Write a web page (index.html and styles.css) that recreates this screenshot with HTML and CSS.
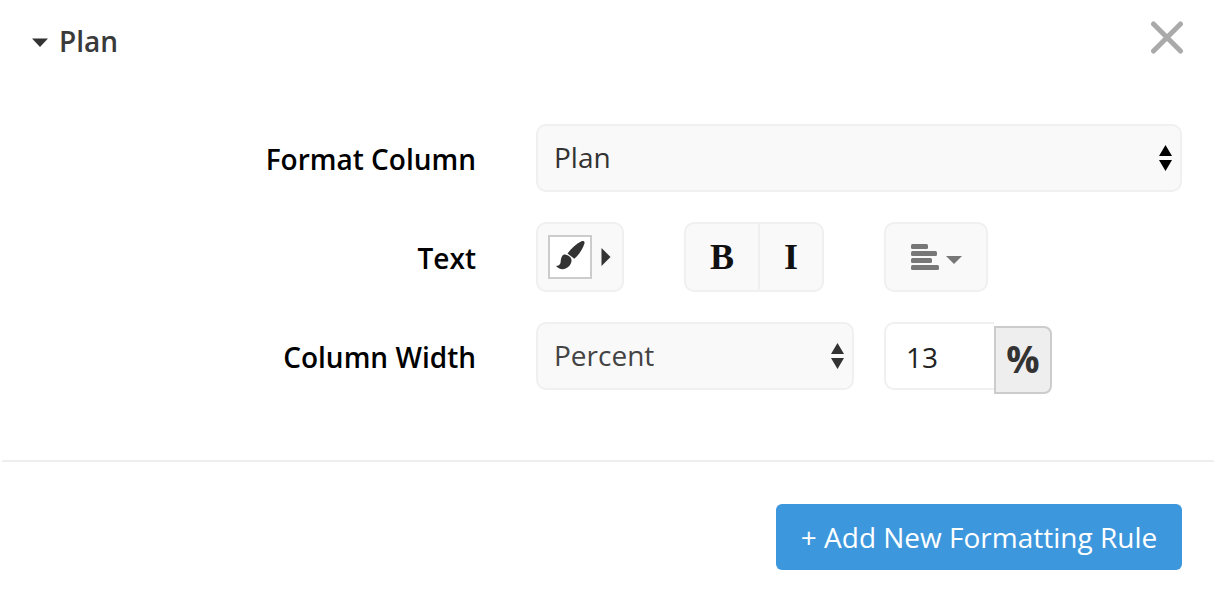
FILE: index.html
```html
<!DOCTYPE html>
<html lang="en">
<head>
<meta charset="utf-8">
<title>Plan</title>
<link rel="stylesheet" href="styles.css">
</head>
<body>
<main class="panel">
  <header class="head">
    <div class="head-title">
      <svg class="head-caret" width="16" height="9" viewBox="0 0 16 9"><path d="M0 0.500h16L8 9z"/></svg>
      <span class="head-text">Plan</span>
    </div>
    <svg class="close" width="34" height="34" viewBox="0 0 34 34"><path d="M3.500 4L30.500 31M30.500 4L3.500 31"/></svg>
  </header>
  <section class="form">
    <div class="row">
      <div class="label">Format Column</div>
      <div class="select select-wide">
        <span>Plan</span>
        <svg class="updown updown-dark" width="13" height="26" viewBox="0 0 13 26"><path d="M6.500 0L13 11H0zM0 15H13L6.500 26z"/></svg>
      </div>
    </div>
    <div class="row row-text">
      <div class="label">Text</div>
      <div class="tool tool-color">
        <span class="swatch">
          <svg width="40" height="40" viewBox="0 0 40 40"><path class="brush" d="M31.500 4.200C33.300 3.300 35 4.400 34.500 6.300 33 11.500 29 18 24.300 21.800L17.500 16.500C21 11.500 27 6.300 31.500 4.200zM14 17.500C18 17.500 22 20.300 21.500 24 21 28.800 16.500 32.300 12.500 32.200 10 32.100 7.500 31 6 29 8 29 10 28 10.500 26 11 23 11 18.800 14 17.500z"/></svg>
        </span>
        <svg class="side-caret" width="10" height="18" viewBox="0 0 10 18"><path d="M0.500 0L9.500 9L0.500 18z"/></svg>
      </div>
      <div class="btn-group">
        <div class="style-btn">B</div>
        <div class="style-btn">I</div>
      </div>
      <div class="tool tool-align">
        <svg width="52" height="27" viewBox="0 0 52 27"><g class="align-bars"><rect x="0" y="0" width="17" height="5" rx="1.500"/><rect x="0" y="7" width="26" height="5" rx="1.500"/><rect x="0" y="14" width="21" height="5" rx="1.500"/><rect x="0" y="21" width="28" height="5" rx="1.500"/></g><path class="align-bars" d="M35 12h16l-8 8z"/></svg>
      </div>
    </div>
    <div class="row row-width">
      <div class="label">Column Width</div>
      <div class="select select-narrow">
        <span>Percent</span>
        <svg class="updown" width="13" height="26" viewBox="0 0 13 26"><path d="M6.500 0L13 11H0zM0 15H13L6.500 26z"/></svg>
      </div>
      <div class="input-group">
        <div class="number">13</div>
        <div class="unit">%</div>
      </div>
    </div>
  </section>
  <hr class="divider">
  <footer class="foot">
    <div class="primary">+ Add New Formatting Rule</div>
  </footer>
</main>
</body>
</html>
```
FILE: styles.css
```css
* { box-sizing: border-box; }
html, body { margin: 0; background: #fff; }
body { font-family: "Open Sans", sans-serif; color: #333; height: 592px; overflow: hidden; }
.panel { width: 1228px; padding-top: 20px; }
.head { display: flex; justify-content: space-between; align-items: flex-start; padding: 0 44px 0 32px; height: 104px; }
.head-title { display: flex; align-items: center; gap: 11px; font-size: 28px; font-weight: 600; line-height: 42px; height: 42px; color: #3a3a3a; }
.head-caret { fill: #333; margin-top: 2px; }
.close path { stroke: #aaa; stroke-width: 5; stroke-linecap: round; fill: none; }
.form { display: flex; flex-direction: column; gap: 30px; }
.row { display: flex; align-items: flex-start; gap: 30px; }
.label { width: 476px; margin-right: 30px; text-align: right; font-size: 28px; font-weight: 600; color: #000; line-height: 70px; height: 68px; }
.row-text .label { height: 70px; line-height: 72px; }
.select { height: 68px; border: 2px solid #f0f0f0; border-radius: 10px; background: #f9f9f9; display: flex; align-items: center; justify-content: space-between; font-size: 28px; padding: 0 8px 0 16px; }
.select span { position: relative; top: -1px; }
.select-wide { width: 646px; color: #333; }
.select-narrow { width: 318px; color: #444; }
.updown { fill: #333; }
.updown-dark { fill: #000; }
.tool { height: 70px; border: 2px solid #f0f0f0; border-radius: 10px; background: #f9f9f9; display: flex; align-items: center; }
.tool-color { width: 88px; padding-left: 10px; gap: 9px; margin-right: 30px; }
.swatch { width: 44px; height: 44px; border: 2px solid #ccc; background: #fff; display: block; }
.swatch svg { display: block; }
.brush { fill: #333; }
.side-caret { fill: #333; }
.btn-group { display: flex; width: 140px; height: 70px; border: 2px solid #f0f0f0; border-radius: 10px; background: #f9f9f9; margin-right: 30px; }
.style-btn { display: flex; align-items: center; justify-content: center; font-family: "Liberation Serif", serif; font-weight: 700; font-size: 36px; color: #111; }
.style-btn:first-child { width: 74px; border-right: 2px solid #f0f0f0; }
.style-btn:last-child { flex: 1; }
.tool-align { width: 104px; justify-content: center; padding-left: 2px; }
.align-bars { fill: #777; }
.input-group { display: flex; align-items: flex-start; }
.number { width: 110px; height: 68px; border: 2px solid #f0f0f0; border-right: 0; border-radius: 10px 0 0 10px; background: #fff; font-size: 28px; line-height: 66px; padding-left: 20px; color: #222; }
.unit { width: 58px; height: 68px; margin-top: 4px; border: 2px solid #ccc; border-radius: 0 8px 8px 0; background: #eee; font-size: 37px; font-weight: 700; text-align: center; line-height: 62px; color: #333; }
.divider { width: 1212px; height: 2px; margin: 66px 0 0 2px; border: 0; background: #eee; }
.foot { display: flex; justify-content: flex-end; padding: 42px 46px 0 0; }
.primary { width: 406px; height: 66px; background: #3d97dd; color: #fff; border-radius: 6px; font-size: 28px; line-height: 66px; text-align: center; }
```
